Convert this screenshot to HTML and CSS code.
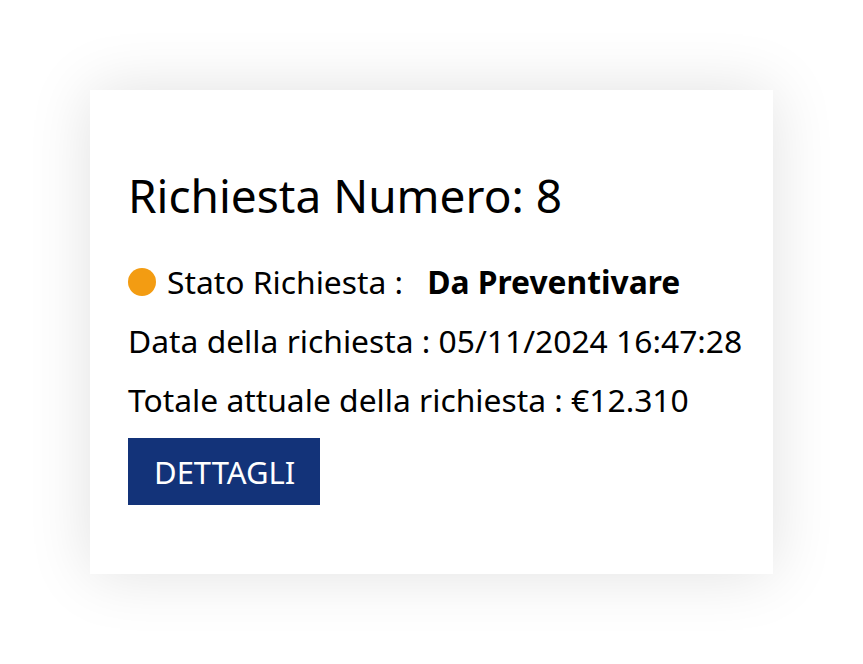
FILE: index.html
```
<!DOCTYPE html>
<html lang="it">

<head>
  <meta charset="UTF-8" />
  <meta name="viewport" content="width=device-width, initial-scale=1.0" />
  <title>Richiesta</title>
  <link rel="stylesheet" href="styles.css">
</head>

<body>

  <div class="card">
    <h2 class="title">Richiesta Numero: 8</h2>

    <p class="row status">
      <span class="dot"></span>
      <span>Stato Richiesta :</span>
      <strong>Da Preventivare</strong>
    </p>
    <p class="row">Data della richiesta : 05/11/2024 16:47:28</p>
    <p class="row">Totale attuale della richiesta : €12.310</p>

    <button class="details-btn">DETTAGLI</button>
  </div>

</body>

</html>
```
FILE: styles.css
```
body {
  font-family: 'Noto Sans', 'Open Sans', sans-serif;
  background: #fff;
  margin: 0;
  padding: 90px;
  color: #000;
}

.card {
  width: 683px;
  height: 484px;
  box-sizing: border-box;
  background: white;
  padding: 77px 20px 0 38px;
  box-shadow: 0 0 60px rgba(0, 0, 0, 0.12);
}

.title {
  font-size: 46px;
  font-weight: 400;
  margin: 0 0 29px;
  line-height: 56px;
}

.row {
  font-size: 31.8px;
  margin: 0;
  line-height: 59px;
  white-space: nowrap;
}

.status {
  display: flex;
  align-items: center;
  gap: 11px;
}

.status strong {
  margin-left: 13px;
}

.dot {
  width: 28px;
  height: 28px;
  border-radius: 50%;
  background: #f39c12;
}

.details-btn {
  display: block;
  background-color: #133379;
  border: none;
  color: white;
  font-family: inherit;
  font-size: 31px;
  padding: 0 25px 0 26px;
  height: 67px;
  margin-top: 9px;
}
```
